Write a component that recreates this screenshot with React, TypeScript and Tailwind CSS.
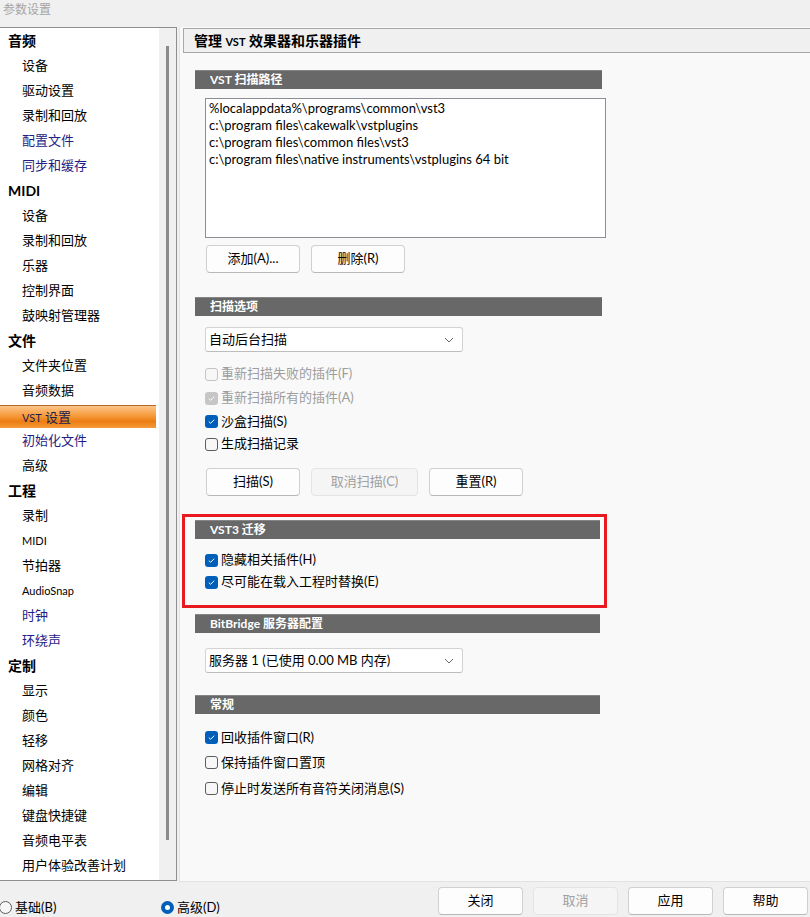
import React from "react";

const FONT = { fontFamily: 'Lato, "Noto Sans CJK SC", sans-serif' };

type NavItem = { label: string; head?: boolean; visited?: boolean; selected?: boolean; small?: boolean };

const NAV: NavItem[] = [
  { label: "音频", head: true },
  { label: "设备" },
  { label: "驱动设置" },
  { label: "录制和回放" },
  { label: "配置文件", visited: true },
  { label: "同步和缓存", visited: true },
  { label: "MIDI", head: true },
  { label: "设备" },
  { label: "录制和回放" },
  { label: "乐器" },
  { label: "控制界面" },
  { label: "鼓映射管理器" },
  { label: "文件", head: true },
  { label: "文件夹位置" },
  { label: "音频数据" },
  { label: "VST 设置", selected: true },
  { label: "初始化文件", visited: true },
  { label: "高级" },
  { label: "工程", head: true },
  { label: "录制" },
  { label: "MIDI", small: true },
  { label: "节拍器" },
  { label: "AudioSnap", small: true },
  { label: "时钟", visited: true },
  { label: "环绕声", visited: true },
  { label: "定制", head: true },
  { label: "显示" },
  { label: "颜色" },
  { label: "轻移" },
  { label: "网格对齐" },
  { label: "编辑" },
  { label: "键盘快捷键" },
  { label: "音频电平表" },
  { label: "用户体验改善计划" },
];

function CheckBox({ checked, disabled }: { checked?: boolean; disabled?: boolean }) {
  if (checked) {
    return (
      <span
        className={
          "flex h-[13px] w-[13px] shrink-0 items-center justify-center rounded-[3px] " +
          (disabled ? "bg-[#c6c6c6]" : "bg-[#005fb8]")
        }
      >
        <svg width="9" height="9" viewBox="0 0 9 9">
          <path d="M1.8 4.6 L3.6 6.3 L7.2 2.7" fill="none" stroke="#fff" strokeWidth="1" />
        </svg>
      </span>
    );
  }
  return (
    <span
      className={
        "h-[13px] w-[13px] shrink-0 rounded-[3px] border bg-[#f7f7f7] " +
        (disabled ? "border-[#c4c4c4]" : "border-[#5c5c5c]")
      }
    />
  );
}

function CheckRow({ label, checked, disabled, h = "h-6" }: { label: string; checked?: boolean; disabled?: boolean; h?: string }) {
  return (
    <div className={"flex items-center gap-[3px] pl-[10px] " + h}>
      <CheckBox checked={checked} disabled={disabled} />
      <span className={"text-[13px] " + (disabled ? "text-[#9d9d9d]" : "text-black")}>{label}</span>
    </div>
  );
}

function SectionBar({ title, wide }: { title: string; wide?: boolean }) {
  return (
    <div
      className={
        "h-[19px] border-t border-[#858585] bg-[#686868] pl-[15px] text-[12px] font-bold leading-[18px] text-white " +
        (wide ? "w-[407px]" : "w-[405px]")
      }
    >
      {title}
    </div>
  );
}

function Btn({ label, disabled, w = "w-[94px]" }: { label: string; disabled?: boolean; w?: string }) {
  return (
    <div
      className={
        "flex h-[28px] items-center justify-center rounded-[4px] border text-[13px] " +
        w +
        " " +
        (disabled
          ? "border-[#e4e4e4] bg-[#f5f5f5] text-[#a0a0a0]"
          : "border-[#d0d0d0] border-b-[#b8b8b8] bg-[#fdfdfd] text-black")
      }
    >
      {label}
    </div>
  );
}

function Select({ value }: { value: string }) {
  return (
    <div className="ml-[10px] flex h-[25px] w-[258px] items-center justify-between rounded-[3px] border border-[#d3d3d3] border-b-[#bdbdbd] bg-white pl-[3px] pr-[8px] text-[13px]">
      <span>{value}</span>
      <svg width="10" height="6" viewBox="0 0 10 6">
        <path d="M1 1 L5 5 L9 1" fill="none" stroke="#6a6a6a" strokeWidth="1" />
      </svg>
    </div>
  );
}

function Radio({ checked }: { checked?: boolean }) {
  return checked ? (
    <span className="flex h-[13px] w-[13px] items-center justify-center rounded-full bg-[#005fb8]">
      <span className="h-[5px] w-[5px] rounded-full bg-white" />
    </span>
  ) : (
    <span className="h-[13px] w-[13px] rounded-full border border-[#5c5c5c] bg-[#f7f7f7]" />
  );
}

export default function App() {
  return (
    <div className="flex h-[917px] w-[810px] flex-col overflow-hidden bg-[#f0f0f0] text-black" style={FONT}>
      {/* title */}
      <div className="h-[27px] pl-[3px] text-[12px] leading-[20px] text-[#a5a5a5]">参数设置</div>

      <div className="flex h-[855px]">
        {/* sidebar */}
        <div className="flex h-[854px] w-[177px] border-y border-r border-[#8e8e8e] bg-white">
          <div className="w-[159px]">
            {NAV.map((it, i) => {
              if (it.head) {
                return (
                  <div key={i} className="h-[25px] pl-[8px] text-[14px] font-bold leading-[25px]">
                    {it.label}
                  </div>
                );
              }
              if (it.selected) {
                return (
                  <div
                    key={i}
                    className="mt-[2px] h-[23px] w-[156px] border-t border-[#b06a2a] bg-[linear-gradient(#fcc48a,#f59a3a_45%,#ec7d12_70%,#f59a3a)] pl-[22px] text-[13px] leading-[22px] text-[#1c1c50]"
                  >
                    <span className="text-[11px]">VST</span> 设置
                  </div>
                );
              }
              return (
                <div
                  key={i}
                  className={
                    "h-[25px] pl-[22px] leading-[25px] " +
                    (it.small ? "text-[11px] " : "text-[13px] ") +
                    (it.visited ? "text-[#231c86]" : "text-black")
                  }
                >
                  {it.label}
                </div>
              );
            })}
          </div>
          <div className="w-[17px] bg-[#f0f0f0] pl-[7px] pt-[18px]">
            <div className="h-[794px] w-[2.5px] bg-[#8a8a8a]" />
          </div>
        </div>

        {/* right panel */}
        <div className="ml-[2px] flex-1 border-b border-l border-[#e2e2e2] bg-[#f9f9f9]">
          <div className="ml-[3px] mt-[1px] h-[25px] border border-r-0 border-[#a8a8a8] bg-[#f0f0f0] pl-[10px] text-[14px] font-bold leading-[23px]">
            管理 <span className="text-[11px]">VST</span> 效果器和乐器插件
          </div>

          <div className="pl-[15px]">
            <div className="mt-[17px]">
              <SectionBar title="VST 扫描路径" wide />
            </div>
            <div className="ml-[10px] mt-[9px] h-[140px] w-[401px] border border-[#8a8d93] bg-white pl-[3px] pt-[1px] text-[13px] leading-[17px]">
              <div>%localappdata%\programs\common\vst3</div>
              <div>c:\program files\cakewalk\vstplugins</div>
              <div>c:\program files\common files\vst3</div>
              <div>c:\program files\native instruments\vstplugins 64 bit</div>
            </div>
            <div className="ml-[11px] mt-[7px] flex gap-[11px]">
              <Btn label="添加(A)..." />
              <Btn label="删除(R)" />
            </div>

            <div className="mt-[24px]">
              <SectionBar title="扫描选项" wide />
            </div>
            <div className="mt-[11px]">
              <Select value="自动后台扫描" />
            </div>
            <div className="mt-[10px]">
              <CheckRow label="重新扫描失败的插件(F)" disabled />
              <CheckRow label="重新扫描所有的插件(A)" checked disabled />
              <CheckRow label="沙盒扫描(S)" checked h="h-[23px]" />
              <CheckRow label="生成扫描记录" h="h-[22px]" />
            </div>
            <div className="ml-[11px] mt-[13px] flex gap-[11px]">
              <Btn label="扫描(S)" />
              <Btn label="取消扫描(C)" disabled w="w-[107px]" />
              <Btn label="重置(R)" />
            </div>

            {/* VST3 迁移 with highlight */}
            <div className="relative mt-[24px]">
              <SectionBar title="VST3 迁移" />
              <div className="mt-[10px]">
                <CheckRow label="隐藏相关插件(H)" checked h="h-[22px]" />
                <CheckRow label="尽可能在载入工程时替换(E)" checked h="h-[22px]" />
              </div>
              <div className="pointer-events-none absolute left-[-13px] top-[-6px] h-[94px] w-[425px] border-[3px] border-[#e8191f]" />
            </div>

            <div className="mt-[21px]">
              <SectionBar title="BitBridge 服务器配置" />
            </div>
            <div className="mt-[15px]">
              <Select value="服务器 1 (已使用 0.00 MB 内存)" />
            </div>
            <div className="mt-[22px]">
              <SectionBar title="常规" />
            </div>
            <div className="mt-[11px]">
              <CheckRow label="回收插件窗口(R)" checked h="h-[25px]" />
              <CheckRow label="保持插件窗口置顶" h="h-[25px]" />
              <CheckRow label="停止时发送所有音符关闭消息(S)" h="h-[27px]" />
            </div>
          </div>
        </div>
      </div>

      {/* bottom bar */}
      <div className="flex h-[35px] items-start">
        <div className="ml-[-1px] mt-[19px] flex w-[162px] items-center gap-[3px] text-[13px] leading-[13px]">
          <Radio />
          <span>基础(B)</span>
        </div>
        <div className="mt-[19px] flex items-center gap-[3px] text-[13px] leading-[13px]">
          <Radio checked />
          <span>高级(D)</span>
        </div>
        <div className="ml-auto mr-[2px] mt-[5px] flex gap-[10px]">
          <Btn label="关闭" w="w-[85px]" />
          <Btn label="取消" disabled w="w-[85px]" />
          <Btn label="应用" w="w-[85px]" />
          <Btn label="帮助" w="w-[85px]" />
        </div>
      </div>
    </div>
  );
}
